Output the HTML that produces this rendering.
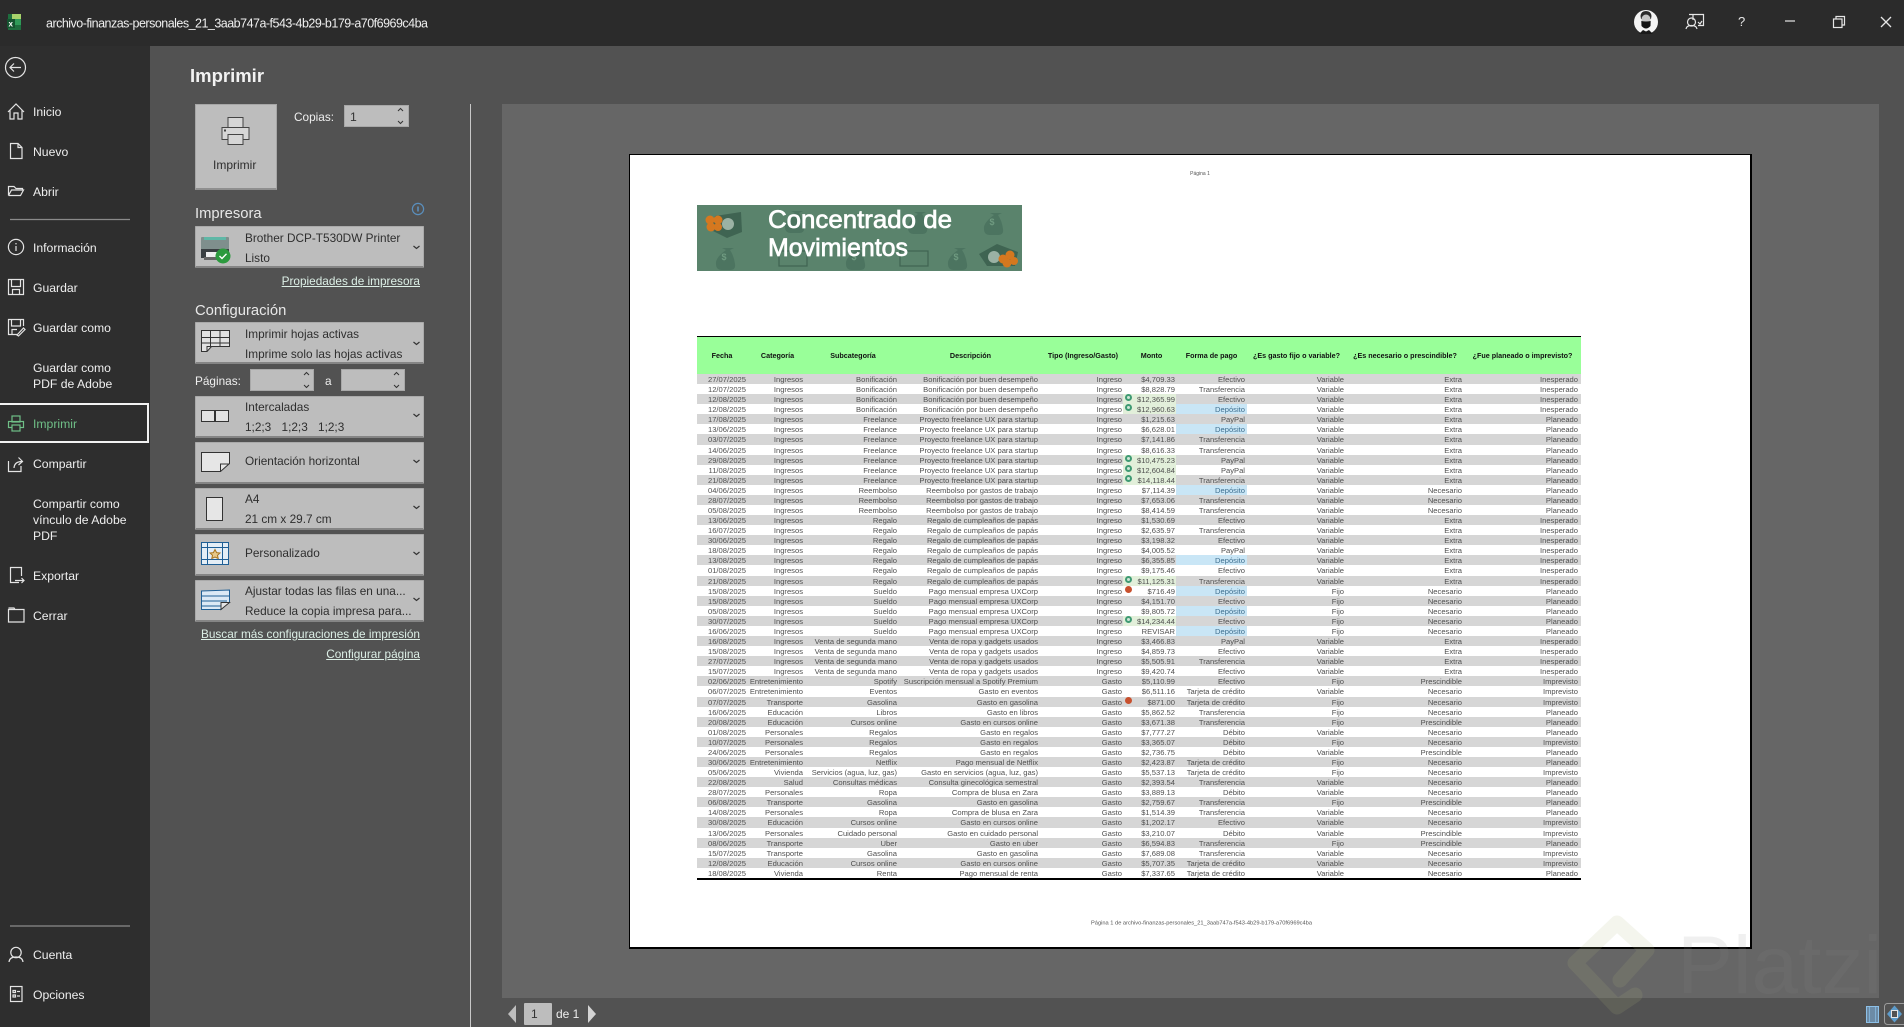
<!DOCTYPE html>
<html lang="es">
<head>
<meta charset="utf-8">
<title>Imprimir</title>
<style>
html,body{margin:0;padding:0;background:#2c2c2c}
#root{position:relative;width:1904px;height:1027px;overflow:hidden;background:#525252;font-family:"Liberation Sans",sans-serif;color:#f0f0f0}
#root>*{position:absolute}
.t{white-space:nowrap;line-height:16px;font-size:12.2px;color:#efefef}
.dd{left:195px;width:227px;background:#bdbdbd;border:1px solid #aaa;border-bottom:2px solid #858585;border-radius:1px;height:39px}
.d{white-space:nowrap;line-height:16px;font-size:11.8px;color:#2e2e2e;left:245px}
.lk{white-space:nowrap;line-height:16px;font-size:11.8px;color:#dcefe6;text-decoration:underline;right:1484px}
.h2{white-space:nowrap;line-height:20px;font-size:15px;color:#e8e8e8;left:195px}
.in{background:#bdbdbd;border:1px solid #a8a8a8;height:20px}
#tb{left:697px;top:374px;width:884px;filter:blur(.25px)}
.r{display:grid;grid-template-columns:50px 57px 94px 141px 84px 53px 71px 99px 118px 117px;grid-template-rows:10.08px;height:10.08px;line-height:12px;font-size:7.6px;color:#505050;background:#fff}
.r:nth-child(odd){background:#d6d6d6}
.r span{display:block;text-align:right;white-space:nowrap;padding-right:1px;position:relative}
.r span:nth-child(7){padding-right:2px}
.r span:nth-child(8),.r span:nth-child(9){padding-right:2px}
.r span:nth-child(10){padding-right:3px}
.g{background:#e2efda}
.b{background:#c9e6f6;color:#3f6f8f}
.r i{position:absolute;left:2px;top:0;width:7px;height:7px;border-radius:50%}
.k{background:#cfe6d6;border:2px solid #3f9a73;width:3px!important;height:3px!important}
.x{background:#c8502d}
#hd{left:697px;top:336px;width:884px;height:37px;background:#99ff99;border-top:1.5px solid #000;border-bottom:1.5px solid #000;display:grid;grid-template-columns:50px 57px 94px 141px 84px 53px 71px 99px 118px 117px;font-size:7.2px;font-weight:bold;color:#111;line-height:37px;text-align:center;white-space:nowrap;filter:blur(.2px)}
#hd span{display:block;overflow:visible;position:relative}
#hd span:nth-child(n+2):nth-child(-n+6){left:2px}
</style>
</head>
<body>
<div id="root">

<!-- title bar -->
<div style="left:0;top:0;width:1904px;height:46px;background:#2b2b2b"></div>
<!-- sidebar -->
<div style="left:0;top:46px;width:150px;height:981px;background:#2e2e2e"></div>

<svg style="left:0;top:0" width="40" height="46">
  <rect x="8" y="14" width="13" height="16" fill="#1e6e3e"/>
  <rect x="12" y="14" width="9" height="5" fill="#a7d36b"/>
  <rect x="12" y="19" width="9" height="6" fill="#2f9a58"/>
  <rect x="7" y="19" width="8" height="9" fill="#14532f"/>
  <text x="8.5" y="26.5" font-family="Liberation Sans" font-size="8" font-weight="bold" fill="#fff">x</text>
</svg>
<svg style="left:40px;top:10px" width="420" height="26">
  <text x="6" y="17.5" font-family="Liberation Sans" font-size="12.5" fill="#f0f0f0" textLength="382" lengthAdjust="spacing">archivo-finanzas-personales_21_3aab747a-f543-4b29-b179-a70f6969c4ba</text>
</svg>

<!-- window controls -->
<svg style="left:1620px;top:0" width="284" height="46" fill="none" stroke="#e6e6e6" stroke-width="1.2">
  <circle cx="26" cy="22" r="12" fill="#f4f4f4" stroke="none"/>
  <path d="M20.5 16 Q21 11 26 11 Q31 11 31.5 16 L31 19 L21 19 Z" fill="#2a2a2a" stroke="none"/>
  <ellipse cx="26" cy="19.5" rx="4.6" ry="5" fill="#c4c4c4" stroke="none"/>
  <path d="M21.3 21 Q26 22 30.7 21 L30.5 26 Q26 31 21.5 26 Z" fill="#141414" stroke="none"/>
  <path d="M19 34 L23 30 L26 31.5 L29 30 L33 34 Z" fill="#1a1a1a" stroke="none"/>
  <path d="M69 14.5 H83.5 V25.5 H78 M73 20 V14.5"/>
  <circle cx="71.5" cy="22" r="4"/>
  <path d="M66 29 Q66.5 25.5 71.5 25.5 Q76.5 25.5 77 29"/>
  <path d="M78 22 l2 2 l2 -3"/>
  <path d="M165 21 H175"/>
  <rect x="213.5" y="19" width="8.5" height="8.5"/>
  <path d="M216 19 V16.5 H224.5 V25 H222"/>
  <path d="M261 17 L271 27 M271 17 L261 27" stroke-width="1.3"/>
</svg>
<div class="t" style="left:1738px;top:14px;font-size:13px;color:#e6e6e6">?</div>

<!-- sidebar icons -->
<svg style="left:0;top:46px" width="150" height="981" viewBox="0 46 150 981" fill="none" stroke="#e4e4e4" stroke-width="1.2">
  <circle cx="15.5" cy="67.5" r="10"/>
  <path d="M21 67.5 H10 M14 63.5 L10 67.5 L14 71.5"/>
  <path d="M8 112 L16 104 L24 112 M10 110 V119 H14 V113 H18 V119 H22 V110"/>
  <path d="M10.5 143.5 H18 L22 147.5 V158.5 H10.5 Z M18 143.5 V147.5 H22"/>
  <path d="M8.5 195.5 V186.5 H14 L16 188.5 H22.5 V190 M8.5 195.5 H20.5 L23.5 190 H11.5 L8.5 195.5"/>
  <path d="M10 219.5 H130" stroke="#8a8a8a"/>
  <circle cx="16" cy="247" r="7.6"/>
  <path d="M16 246 V251 M16 243 V244.4"/>
  <path d="M8.5 279.5 H23.5 V294.5 H8.5 Z M11.5 279.5 V286.5 H20.5 V279.5 M12.5 294.5 V289.5 H19.5 V294.5"/>
  <path d="M18 334.5 H8.5 V319.5 H23.5 V326 M11.5 319.5 V326 H20.5 V319.5 M12 334.5 V329.5 H17"/>
  <path d="M17 335 L23.5 328 L25 329.5 L18.5 336 Z"/>
  <g stroke="#6fbf87">
    <rect x="12" y="416" width="8" height="6"/>
    <rect x="8.5" y="421.5" width="15" height="6"/>
    <rect x="12" y="425" width="8" height="6" fill="#2e2e2e"/>
  </g>
  <path d="M8.5 461 V471.5 H21 V466 M14 468 Q14.5 461.5 22 461.5 M18.5 457.5 L22.5 461.5 L18.5 465"/>
  <path d="M19 582.5 H10.5 V567.5 H21.5 V576 M15 580.5 H24 M21.5 578 L24 580.5 L21.5 583"/>
  <path d="M8.5 609.5 H24 V622 H8.5 Z M8.5 608 H14 L15 609.5"/>
  <path d="M10 926 H130" stroke="#8a8a8a"/>
  <circle cx="16" cy="952.5" r="5.2"/>
  <path d="M9 962 Q9.5 957 16 957 Q22.5 957 23 962"/>
  <rect x="10.5" y="986.5" width="11.5" height="15"/>
  <path d="M13 990.5 H15.5 V992.5 H13 Z M13 995 H15.5 V997 H13 Z M17 991.5 H20 M17 996 H20"/>
</svg>

<div class="t" style="left:33px;top:104px">Inicio</div>
<div class="t" style="left:33px;top:144px">Nuevo</div>
<div class="t" style="left:33px;top:184px">Abrir</div>
<div class="t" style="left:33px;top:240px">Información</div>
<div class="t" style="left:33px;top:280px">Guardar</div>
<div class="t" style="left:33px;top:320px">Guardar como</div>
<div class="t" style="left:33px;top:360px">Guardar como</div>
<div class="t" style="left:33px;top:376px">PDF de Adobe</div>
<div style="left:0;top:403px;width:147px;height:36px;border:2px solid #f2f2f2;border-left:none"></div>
<div class="t" style="left:33px;top:416px;color:#6fbf87">Imprimir</div>
<div class="t" style="left:33px;top:456px">Compartir</div>
<div class="t" style="left:33px;top:496px">Compartir como</div>
<div class="t" style="left:33px;top:512px">vínculo de Adobe</div>
<div class="t" style="left:33px;top:528px">PDF</div>
<div class="t" style="left:33px;top:568px">Exportar</div>
<div class="t" style="left:33px;top:608px">Cerrar</div>
<div class="t" style="left:33px;top:947px">Cuenta</div>
<div class="t" style="left:33px;top:987px">Opciones</div>

<!-- main column -->
<div style="left:190px;top:65px;font-size:18.5px;font-weight:bold;line-height:22px;color:#f2f2f2;white-space:nowrap">Imprimir</div>

<div style="left:195px;top:104px;width:80px;height:83px;background:#bdbdbd;border:1px solid #a6a6a6;border-bottom:2px solid #8f8f8f"></div>
<svg style="left:215px;top:112px" width="44" height="40" fill="#d6d6d6" stroke="#444" stroke-width="1">
  <rect x="13" y="5.5" width="15" height="11"/>
  <rect x="7" y="15.5" width="27" height="12"/>
  <rect x="13" y="22.5" width="15" height="10"/>
  <rect x="9" y="17.5" width="2" height="2" fill="#444" stroke="none"/>
</svg>
<div class="t" style="left:213px;top:157px;color:#2e2e2e;font-size:12px">Imprimir</div>

<div class="t" style="left:294px;top:109px;font-size:11.8px">Copias:</div>
<div class="in" style="left:344px;top:105px;width:63px"></div>
<div class="t" style="left:350px;top:109px;color:#333">1</div>
<svg style="left:394px;top:105px" width="14" height="22" fill="none" stroke="#333" stroke-width="1"><path d="M4 6 L6.5 3.5 L9 6 M4 16 L6.5 18.5 L9 16"/></svg>

<div class="h2" style="top:204px;font-size:14.8px">Impresora</div>
<svg style="left:410px;top:201px" width="16" height="16" fill="none" stroke="#5a8fbd" stroke-width="1.2"><circle cx="8" cy="8" r="5.6"/><path d="M8 5.5 V10.5" stroke-width="1.6"/></svg>

<div class="dd" style="top:226px"></div>
<svg style="left:200px;top:234px" width="34" height="34">
  <rect x="1" y="3" width="28" height="14" rx="1" fill="#7f8f8d"/>
  <rect x="4" y="3" width="22" height="3" fill="#5fb7a6"/>
  <rect x="1" y="15" width="28" height="9" fill="#3a3f42"/>
  <rect x="6" y="18" width="17" height="5" fill="#eee"/>
  <rect x="4" y="23" width="20" height="3" fill="#666"/>
  <circle cx="23" cy="22" r="7.5" fill="#2c9a3e"/>
  <path d="M19.5 22 L22 24.5 L26.5 19.8" fill="none" stroke="#fff" stroke-width="1.4"/>
</svg>
<div class="d" style="top:230px">Brother DCP-T530DW Printer</div>
<div class="d" style="top:250px">Listo</div>
<div class="lk" style="top:273px">Propiedades de impresora</div>

<div class="h2" style="top:300.5px;font-size:14.8px">Configuración</div>

<div class="dd" style="top:322px"></div>
<svg style="left:200px;top:328px" width="32" height="28" fill="#e2e2e2" stroke="#333" stroke-width="1">
  <path d="M1.5 2.5 H29.5 V18.5 H11.5 L7 23.5 H1.5 Z"/>
  <path d="M1.5 9.5 H29.5 M1.5 15 H29.5 M10.5 2.5 V18.5 M20 2.5 V18.5" fill="none"/>
  <path d="M7 23.5 V18.5 H11.5" fill="none"/>
</svg>
<div class="d" style="top:326px">Imprimir hojas activas</div>
<div class="d" style="top:346px">Imprime solo las hojas activas</div>

<div class="t" style="left:195px;top:373px;font-size:11.8px">Páginas:</div>
<div class="in" style="left:250px;top:369px;width:62px"></div>
<div class="t" style="left:325px;top:373px;font-size:11.8px">a</div>
<div class="in" style="left:341px;top:369px;width:62px"></div>
<svg style="left:300px;top:369px" width="14" height="22" fill="none" stroke="#333" stroke-width="1"><path d="M4 6 L6.5 3.5 L9 6 M4 16 L6.5 18.5 L9 16"/></svg>
<svg style="left:390px;top:369px" width="14" height="22" fill="none" stroke="#333" stroke-width="1"><path d="M4 6 L6.5 3.5 L9 6 M4 16 L6.5 18.5 L9 16"/></svg>

<div class="dd" style="top:396px"></div>
<svg style="left:200px;top:408px" width="32" height="16" fill="#e2e2e2" stroke="#333" stroke-width="1"><rect x="1.5" y="2.5" width="13" height="11"/><rect x="15.5" y="2.5" width="13" height="11"/></svg>
<div class="d" style="top:399px">Intercaladas</div>
<div class="d" style="top:419px;word-spacing:7px">1;2;3 1;2;3 1;2;3</div>

<div class="dd" style="top:442px"></div>
<svg style="left:200px;top:450px" width="32" height="24" fill="#e6e6e6" stroke="#333" stroke-width="1"><path d="M1.5 2.5 H29.5 V13.5 L20.5 21.5 H1.5 Z"/><path d="M20.5 21.5 V14 H29.5" fill="none"/></svg>
<div class="d" style="top:453px">Orientación horizontal</div>

<div class="dd" style="top:488px"></div>
<svg style="left:204px;top:495px" width="22" height="28" fill="#e6e6e6" stroke="#333" stroke-width="1"><rect x="2.5" y="2.5" width="16" height="23"/></svg>
<div class="d" style="top:491px">A4</div>
<div class="d" style="top:511px">21 cm x 29.7 cm</div>

<div class="dd" style="top:534px"></div>
<svg style="left:200px;top:540px" width="32" height="28" fill="none" stroke="#1f5f95" stroke-width="1">
  <rect x="1.5" y="2.5" width="27" height="22" fill="#e4eef6"/>
  <path d="M7.5 2.5 V24.5 M22.5 2.5 V24.5 M1.5 7.5 H28.5 M1.5 19.5 H28.5"/>
  <path d="M15 9.5 L16.6 12.6 L20 13 L17.5 15.3 L18.2 18.5 L15 17 L11.8 18.5 L12.5 15.3 L10 13 L13.4 12.6 Z" fill="#e6c98a" stroke="#a8761f"/>
</svg>
<div class="d" style="top:545px">Personalizado</div>

<div class="dd" style="top:580px"></div>
<svg style="left:200px;top:588px" width="32" height="24" fill="#dbe9f5" stroke="#1f5f95" stroke-width="1">
  <path d="M1.5 3 L29.5 2 V14 L21 21.5 H1.5 Z"/>
  <path d="M1.5 8 H29.5 M1.5 13 H27 M1.5 18 H21" fill="none"/>
  <path d="M21 21.5 V14.5 H29.5 Z" fill="#e6e6e6" stroke="#333"/>
</svg>
<div class="d" style="top:583px">Ajustar todas las filas en una...</div>
<div class="d" style="top:603px">Reduce la copia impresa para...</div>

<svg style="left:410px;top:226px" width="14" height="400" fill="none" stroke="#333" stroke-width="1.2">
  <path d="M3.5 20 L6.5 22.5 L9.5 20"/>
  <path d="M3.5 116 L6.5 118.5 L9.5 116"/>
  <path d="M3.5 188 L6.5 190.5 L9.5 188"/>
  <path d="M3.5 234 L6.5 236.5 L9.5 234"/>
  <path d="M3.5 280 L6.5 282.5 L9.5 280"/>
  <path d="M3.5 326 L6.5 328.5 L9.5 326"/>
  <path d="M3.5 372 L6.5 374.5 L9.5 372"/>
</svg>

<div class="lk" style="top:626px">Buscar más configuraciones de impresión</div>
<div class="lk" style="top:646px">Configurar página</div>

<div style="left:470px;top:104px;width:1px;height:923px;background:#c8c8c8"></div>

<!-- preview -->
<div style="left:502px;top:104px;width:1377px;height:894px;background:#666"></div>
<div style="left:629px;top:154px;width:1120px;height:792px;background:#fff;border:1px solid #000;border-right-width:2px;border-bottom-width:2px"></div>

<div style="left:1180px;top:171px;width:40px;text-align:center;font-size:5px;line-height:6px;color:#555;white-space:nowrap">Página 1</div>

<!-- banner -->
<svg style="left:697px;top:205px" width="325" height="66" viewBox="0 0 325 66">
  <rect width="325" height="66" fill="#5a836c"/>
  <g fill="#4c7460">
    <path d="M28 51 q-1 -8 -5 -14 l4 -2 h-12 l4 2 q-11 8 -10 14 q0 6 6 6 h8 q6 0 5 -6z" transform="translate(10,8)"/>
    <path d="M28 51 q-1 -8 -5 -14 l4 -2 h-12 l4 2 q-11 8 -10 14 q0 6 6 6 h8 q6 0 5 -6z" transform="translate(140,8)"/>
    <path d="M28 51 q-1 -8 -5 -14 l4 -2 h-12 l4 2 q-11 8 -10 14 q0 6 6 6 h8 q6 0 5 -6z" transform="translate(242,8)"/>
    <path d="M28 51 q-1 -8 -5 -14 l4 -2 h-12 l4 2 q-11 8 -10 14 q0 6 6 6 h8 q6 0 5 -6z" transform="translate(278,-27)"/>
    <path d="M28 51 q-1 -8 -5 -14 l4 -2 h-12 l4 2 q-11 8 -10 14 q0 6 6 6 h8 q6 0 5 -6z" transform="translate(79,-29)"/>
    <path d="M28 51 q-1 -8 -5 -14 l4 -2 h-12 l4 2 q-11 8 -10 14 q0 6 6 6 h8 q6 0 5 -6z" transform="translate(202,-28)"/>
  </g>
  <g font-family="Liberation Sans" font-size="9" font-weight="bold" fill="#6f9a80" text-anchor="middle">
    <text x="27" y="55">$</text><text x="157" y="55">$</text><text x="259" y="55">$</text><text x="295" y="20">$</text>
  </g>
  <g fill="#3f6452">
    <path d="M18 11 L44 7 L45 27 L30 33 L14 25 Z"/>
    <path d="M300 39 L321 47 L318 61 L290 61 L282 49 Z"/>
    <rect x="82" y="46" width="28" height="15" fill="none" stroke="#3f6452" stroke-width="1.2"/>
    <rect x="203" y="46" width="28" height="15" fill="none" stroke="#3f6452" stroke-width="1.2"/>
  </g>
  <g fill="#d9e6dc"><circle cx="31" cy="19" r="6" opacity=".6"/><circle cx="297" cy="52" r="6" opacity=".6"/></g>
  <g fill="#d5781f">
    <circle cx="13" cy="15" r="4.5"/><circle cx="21" cy="15" r="4.5"/><circle cx="14" cy="22" r="4.5"/><circle cx="21" cy="22" r="4"/>
    <circle cx="306" cy="54" r="4.5"/><circle cx="313" cy="50" r="4.5"/><circle cx="310" cy="58" r="4.5"/><circle cx="317" cy="56" r="4"/>
  </g>
  <text x="71" y="23" font-family="Liberation Sans" font-size="25" fill="#fff" stroke="#fff" stroke-width=".7" textLength="184" lengthAdjust="spacingAndGlyphs">Concentrado de</text>
  <text x="71" y="51" font-family="Liberation Sans" font-size="25" fill="#fff" stroke="#fff" stroke-width=".7" textLength="140" lengthAdjust="spacingAndGlyphs">Movimientos</text>
</svg>

<!-- table header -->
<div id="hd"><span>Fecha</span><span>Categoría</span><span>Subcategoría</span><span>Descripción</span><span>Tipo (Ingreso/Gasto)</span><span>Monto</span><span>Forma de pago</span><span>¿Es gasto fijo o variable?</span><span>¿Es necesario o prescindible?</span><span>¿Fue planeado o imprevisto?</span></div>

<!-- table body -->
<div id="tb">
<div class="r"><span>27/07/2025</span><span>Ingresos</span><span>Bonificación</span><span>Bonificación por buen desempeño</span><span>Ingreso</span><span>$4,709.33</span><span>Efectivo</span><span>Variable</span><span>Extra</span><span>Inesperado</span></div>
<div class="r"><span>12/07/2025</span><span>Ingresos</span><span>Bonificación</span><span>Bonificación por buen desempeño</span><span>Ingreso</span><span>$8,828.79</span><span>Transferencia</span><span>Variable</span><span>Extra</span><span>Inesperado</span></div>
<div class="r"><span>12/08/2025</span><span>Ingresos</span><span>Bonificación</span><span>Bonificación por buen desempeño</span><span>Ingreso</span><span class="g"><i class="k"></i>$12,365.99</span><span>Efectivo</span><span>Variable</span><span>Extra</span><span>Inesperado</span></div>
<div class="r"><span>12/08/2025</span><span>Ingresos</span><span>Bonificación</span><span>Bonificación por buen desempeño</span><span>Ingreso</span><span class="g"><i class="k"></i>$12,960.63</span><span class="b">Depósito</span><span>Variable</span><span>Extra</span><span>Inesperado</span></div>
<div class="r"><span>17/08/2025</span><span>Ingresos</span><span>Freelance</span><span>Proyecto freelance UX para startup</span><span>Ingreso</span><span>$1,215.63</span><span>PayPal</span><span>Variable</span><span>Extra</span><span>Planeado</span></div>
<div class="r"><span>13/06/2025</span><span>Ingresos</span><span>Freelance</span><span>Proyecto freelance UX para startup</span><span>Ingreso</span><span>$6,628.01</span><span class="b">Depósito</span><span>Variable</span><span>Extra</span><span>Planeado</span></div>
<div class="r"><span>03/07/2025</span><span>Ingresos</span><span>Freelance</span><span>Proyecto freelance UX para startup</span><span>Ingreso</span><span>$7,141.86</span><span>Transferencia</span><span>Variable</span><span>Extra</span><span>Planeado</span></div>
<div class="r"><span>14/06/2025</span><span>Ingresos</span><span>Freelance</span><span>Proyecto freelance UX para startup</span><span>Ingreso</span><span>$8,616.33</span><span>Transferencia</span><span>Variable</span><span>Extra</span><span>Planeado</span></div>
<div class="r"><span>29/08/2025</span><span>Ingresos</span><span>Freelance</span><span>Proyecto freelance UX para startup</span><span>Ingreso</span><span class="g"><i class="k"></i>$10,475.23</span><span>PayPal</span><span>Variable</span><span>Extra</span><span>Planeado</span></div>
<div class="r"><span>11/08/2025</span><span>Ingresos</span><span>Freelance</span><span>Proyecto freelance UX para startup</span><span>Ingreso</span><span class="g"><i class="k"></i>$12,604.84</span><span>PayPal</span><span>Variable</span><span>Extra</span><span>Planeado</span></div>
<div class="r"><span>21/08/2025</span><span>Ingresos</span><span>Freelance</span><span>Proyecto freelance UX para startup</span><span>Ingreso</span><span class="g"><i class="k"></i>$14,118.44</span><span>Transferencia</span><span>Variable</span><span>Extra</span><span>Planeado</span></div>
<div class="r"><span>04/06/2025</span><span>Ingresos</span><span>Reembolso</span><span>Reembolso por gastos de trabajo</span><span>Ingreso</span><span>$7,114.39</span><span class="b">Depósito</span><span>Variable</span><span>Necesario</span><span>Planeado</span></div>
<div class="r"><span>28/07/2025</span><span>Ingresos</span><span>Reembolso</span><span>Reembolso por gastos de trabajo</span><span>Ingreso</span><span>$7,653.06</span><span>Transferencia</span><span>Variable</span><span>Necesario</span><span>Planeado</span></div>
<div class="r"><span>05/08/2025</span><span>Ingresos</span><span>Reembolso</span><span>Reembolso por gastos de trabajo</span><span>Ingreso</span><span>$8,414.59</span><span>Transferencia</span><span>Variable</span><span>Necesario</span><span>Planeado</span></div>
<div class="r"><span>13/06/2025</span><span>Ingresos</span><span>Regalo</span><span>Regalo de cumpleaños de papás</span><span>Ingreso</span><span>$1,530.69</span><span>Efectivo</span><span>Variable</span><span>Extra</span><span>Inesperado</span></div>
<div class="r"><span>16/07/2025</span><span>Ingresos</span><span>Regalo</span><span>Regalo de cumpleaños de papás</span><span>Ingreso</span><span>$2,635.97</span><span>Transferencia</span><span>Variable</span><span>Extra</span><span>Inesperado</span></div>
<div class="r"><span>30/06/2025</span><span>Ingresos</span><span>Regalo</span><span>Regalo de cumpleaños de papás</span><span>Ingreso</span><span>$3,198.32</span><span>Efectivo</span><span>Variable</span><span>Extra</span><span>Inesperado</span></div>
<div class="r"><span>18/08/2025</span><span>Ingresos</span><span>Regalo</span><span>Regalo de cumpleaños de papás</span><span>Ingreso</span><span>$4,005.52</span><span>PayPal</span><span>Variable</span><span>Extra</span><span>Inesperado</span></div>
<div class="r"><span>13/08/2025</span><span>Ingresos</span><span>Regalo</span><span>Regalo de cumpleaños de papás</span><span>Ingreso</span><span>$6,355.85</span><span class="b">Depósito</span><span>Variable</span><span>Extra</span><span>Inesperado</span></div>
<div class="r"><span>01/08/2025</span><span>Ingresos</span><span>Regalo</span><span>Regalo de cumpleaños de papás</span><span>Ingreso</span><span>$9,175.46</span><span>Efectivo</span><span>Variable</span><span>Extra</span><span>Inesperado</span></div>
<div class="r"><span>21/08/2025</span><span>Ingresos</span><span>Regalo</span><span>Regalo de cumpleaños de papás</span><span>Ingreso</span><span class="g"><i class="k"></i>$11,125.31</span><span>Transferencia</span><span>Variable</span><span>Extra</span><span>Inesperado</span></div>
<div class="r"><span>15/08/2025</span><span>Ingresos</span><span>Sueldo</span><span>Pago mensual empresa UXCorp</span><span>Ingreso</span><span><i class="x"></i>$716.49</span><span class="b">Depósito</span><span>Fijo</span><span>Necesario</span><span>Planeado</span></div>
<div class="r"><span>15/08/2025</span><span>Ingresos</span><span>Sueldo</span><span>Pago mensual empresa UXCorp</span><span>Ingreso</span><span>$4,151.70</span><span>Efectivo</span><span>Fijo</span><span>Necesario</span><span>Planeado</span></div>
<div class="r"><span>05/08/2025</span><span>Ingresos</span><span>Sueldo</span><span>Pago mensual empresa UXCorp</span><span>Ingreso</span><span>$9,805.72</span><span class="b">Depósito</span><span>Fijo</span><span>Necesario</span><span>Planeado</span></div>
<div class="r"><span>30/07/2025</span><span>Ingresos</span><span>Sueldo</span><span>Pago mensual empresa UXCorp</span><span>Ingreso</span><span class="g"><i class="k"></i>$14,234.44</span><span>Efectivo</span><span>Fijo</span><span>Necesario</span><span>Planeado</span></div>
<div class="r"><span>16/06/2025</span><span>Ingresos</span><span>Sueldo</span><span>Pago mensual empresa UXCorp</span><span>Ingreso</span><span>REVISAR</span><span class="b">Depósito</span><span>Fijo</span><span>Necesario</span><span>Planeado</span></div>
<div class="r"><span>16/08/2025</span><span>Ingresos</span><span>Venta de segunda mano</span><span>Venta de ropa y gadgets usados</span><span>Ingreso</span><span>$3,466.83</span><span>PayPal</span><span>Variable</span><span>Extra</span><span>Inesperado</span></div>
<div class="r"><span>15/08/2025</span><span>Ingresos</span><span>Venta de segunda mano</span><span>Venta de ropa y gadgets usados</span><span>Ingreso</span><span>$4,859.73</span><span>Efectivo</span><span>Variable</span><span>Extra</span><span>Inesperado</span></div>
<div class="r"><span>27/07/2025</span><span>Ingresos</span><span>Venta de segunda mano</span><span>Venta de ropa y gadgets usados</span><span>Ingreso</span><span>$5,505.91</span><span>Transferencia</span><span>Variable</span><span>Extra</span><span>Inesperado</span></div>
<div class="r"><span>15/07/2025</span><span>Ingresos</span><span>Venta de segunda mano</span><span>Venta de ropa y gadgets usados</span><span>Ingreso</span><span>$9,420.74</span><span>Efectivo</span><span>Variable</span><span>Extra</span><span>Inesperado</span></div>
<div class="r"><span>02/06/2025</span><span>Entretenimiento</span><span>Spotify</span><span>Suscripción mensual a Spotify Premium</span><span>Gasto</span><span>$5,110.99</span><span>Efectivo</span><span>Fijo</span><span>Prescindible</span><span>Imprevisto</span></div>
<div class="r"><span>06/07/2025</span><span>Entretenimiento</span><span>Eventos</span><span>Gasto en eventos</span><span>Gasto</span><span>$6,511.16</span><span>Tarjeta de crédito</span><span>Variable</span><span>Necesario</span><span>Imprevisto</span></div>
<div class="r"><span>07/07/2025</span><span>Transporte</span><span>Gasolina</span><span>Gasto en gasolina</span><span>Gasto</span><span><i class="x"></i>$871.00</span><span>Tarjeta de crédito</span><span>Fijo</span><span>Necesario</span><span>Imprevisto</span></div>
<div class="r"><span>16/06/2025</span><span>Educación</span><span>Libros</span><span>Gasto en libros</span><span>Gasto</span><span>$5,862.52</span><span>Transferencia</span><span>Fijo</span><span>Necesario</span><span>Planeado</span></div>
<div class="r"><span>20/08/2025</span><span>Educación</span><span>Cursos online</span><span>Gasto en cursos online</span><span>Gasto</span><span>$3,671.38</span><span>Transferencia</span><span>Fijo</span><span>Prescindible</span><span>Planeado</span></div>
<div class="r"><span>01/08/2025</span><span>Personales</span><span>Regalos</span><span>Gasto en regalos</span><span>Gasto</span><span>$7,777.27</span><span>Débito</span><span>Variable</span><span>Necesario</span><span>Planeado</span></div>
<div class="r"><span>10/07/2025</span><span>Personales</span><span>Regalos</span><span>Gasto en regalos</span><span>Gasto</span><span>$3,365.07</span><span>Débito</span><span>Fijo</span><span>Necesario</span><span>Imprevisto</span></div>
<div class="r"><span>24/06/2025</span><span>Personales</span><span>Regalos</span><span>Gasto en regalos</span><span>Gasto</span><span>$2,736.75</span><span>Débito</span><span>Variable</span><span>Prescindible</span><span>Planeado</span></div>
<div class="r"><span>30/06/2025</span><span>Entretenimiento</span><span>Netflix</span><span>Pago mensual de Netflix</span><span>Gasto</span><span>$2,423.87</span><span>Tarjeta de crédito</span><span>Fijo</span><span>Necesario</span><span>Planeado</span></div>
<div class="r"><span>05/06/2025</span><span>Vivienda</span><span>Servicios (agua, luz, gas)</span><span>Gasto en servicios (agua, luz, gas)</span><span>Gasto</span><span>$5,537.13</span><span>Tarjeta de crédito</span><span>Fijo</span><span>Necesario</span><span>Imprevisto</span></div>
<div class="r"><span>22/08/2025</span><span>Salud</span><span>Consultas médicas</span><span>Consulta ginecológica semestral</span><span>Gasto</span><span>$2,393.54</span><span>Transferencia</span><span>Variable</span><span>Necesario</span><span>Planeado</span></div>
<div class="r"><span>28/07/2025</span><span>Personales</span><span>Ropa</span><span>Compra de blusa en Zara</span><span>Gasto</span><span>$3,889.13</span><span>Débito</span><span>Variable</span><span>Necesario</span><span>Planeado</span></div>
<div class="r"><span>06/08/2025</span><span>Transporte</span><span>Gasolina</span><span>Gasto en gasolina</span><span>Gasto</span><span>$2,759.67</span><span>Transferencia</span><span>Fijo</span><span>Prescindible</span><span>Planeado</span></div>
<div class="r"><span>14/08/2025</span><span>Personales</span><span>Ropa</span><span>Compra de blusa en Zara</span><span>Gasto</span><span>$1,514.39</span><span>Transferencia</span><span>Variable</span><span>Necesario</span><span>Planeado</span></div>
<div class="r"><span>30/08/2025</span><span>Educación</span><span>Cursos online</span><span>Gasto en cursos online</span><span>Gasto</span><span>$1,202.17</span><span>Efectivo</span><span>Variable</span><span>Necesario</span><span>Imprevisto</span></div>
<div class="r"><span>13/06/2025</span><span>Personales</span><span>Cuidado personal</span><span>Gasto en cuidado personal</span><span>Gasto</span><span>$3,210.07</span><span>Débito</span><span>Variable</span><span>Prescindible</span><span>Imprevisto</span></div>
<div class="r"><span>08/06/2025</span><span>Transporte</span><span>Uber</span><span>Gasto en uber</span><span>Gasto</span><span>$6,594.83</span><span>Transferencia</span><span>Fijo</span><span>Prescindible</span><span>Planeado</span></div>
<div class="r"><span>15/07/2025</span><span>Transporte</span><span>Gasolina</span><span>Gasto en gasolina</span><span>Gasto</span><span>$7,689.08</span><span>Transferencia</span><span>Variable</span><span>Necesario</span><span>Imprevisto</span></div>
<div class="r"><span>12/08/2025</span><span>Educación</span><span>Cursos online</span><span>Gasto en cursos online</span><span>Gasto</span><span>$5,707.35</span><span>Tarjeta de crédito</span><span>Variable</span><span>Necesario</span><span>Imprevisto</span></div>
<div class="r"><span>18/08/2025</span><span>Vivienda</span><span>Renta</span><span>Pago mensual de renta</span><span>Gasto</span><span>$7,337.65</span><span>Tarjeta de crédito</span><span>Variable</span><span>Necesario</span><span>Planeado</span></div>
</div>
<div style="left:697px;top:878px;width:884px;height:1.5px;background:#000"></div>

<svg style="left:1080px;top:915px" width="250" height="14">
  <text x="11" y="9.5" font-family="Liberation Sans" font-size="5.4" fill="#555" textLength="221" lengthAdjust="spacingAndGlyphs">Página 1 de archivo-finanzas-personales_21_3aab747a-f543-4b29-b179-a70f6969c4ba</text>
</svg>

<!-- bottom nav -->
<svg style="left:505px;top:1003px" width="14" height="22"><path d="M11 2 V20 L3 11 Z" fill="#bdbdbd"/></svg>
<div style="left:524px;top:1003px;width:28px;height:22px;background:#bdbdbd;border-radius:1px"></div>
<div class="t" style="left:531px;top:1006px;color:#333;font-size:12px">1</div>
<div class="t" style="left:556px;top:1006px;font-size:12px">de 1</div>
<svg style="left:585px;top:1003px" width="14" height="22"><path d="M3 2 V20 L11 11 Z" fill="#d4d4d4"/></svg>

<svg style="left:1860px;top:1000px" width="44" height="27" fill="none">
  <rect x="6.5" y="6.5" width="12" height="16" fill="#6c8ba6" stroke="#8cc0e8"/>
  <path d="M9.5 6.5 V22.5 M15.5 6.5 V22.5" stroke="#8cc0e8" stroke-width=".7"/>
  <rect x="24.5" y="3.5" width="22" height="21" rx="3" stroke="#9c9c9c"/>
  <path d="M34.5 5.5 L42 14 L34.5 22.5 L27 14 Z" fill="#5d9ccc"/>
  <rect x="31.5" y="10.5" width="6" height="7" fill="#525252" stroke="#e6e6e6"/>
</svg>

<!-- watermark -->
<svg style="left:1560px;top:905px" width="340" height="122">
  <path d="M60 75 L87 45 L57 18 L15 58 L57 102 L75 90" fill="none" stroke="#b0b880" stroke-opacity=".14" stroke-width="15" stroke-linejoin="round" stroke-linecap="round"/>
  <text x="117" y="88" font-family="Liberation Sans" font-size="82" fill="#888" fill-opacity=".13" textLength="205" lengthAdjust="spacingAndGlyphs">Platzi</text>
</svg>

</div>
</body>
</html>
